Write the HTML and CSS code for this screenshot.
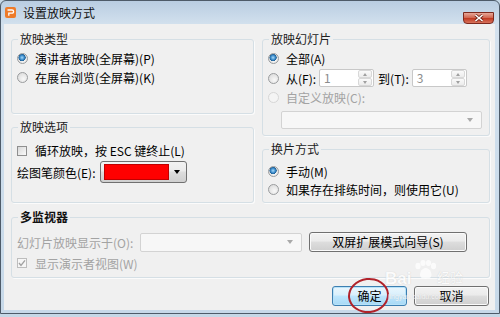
FILE: index.html
```html
<!DOCTYPE html>
<html lang="zh-CN">
<head>
  <meta charset="UTF-8" />
  <title>设置放映方式</title>
  <link rel="stylesheet" href="styles.css">
</head>
<body>
  <div class="window">
    <div class="titlebar">
      <svg class="app-icon" viewBox="0 0 11 11" width="11" height="11">
        <rect width="11" height="11" rx="2" fill="#ee7b2a"/>
        <path d="M2.5 3 H7 Q8.6 3 8.6 4.6 Q8.6 6.2 7 6.2 H3.8 V8.8" fill="none" stroke="#fff" stroke-width="1.3"/>
      </svg>
      <span class="title">设置放映方式</span>
      <button class="close-btn">
        <svg viewBox="0 0 10 8" width="10" height="8">
          <path d="M1.5 1 L8.5 7 M8.5 1 L1.5 7" stroke="#6e2418" stroke-width="3"/>
          <path d="M1.5 1 L8.5 7 M8.5 1 L1.5 7" stroke="#fff" stroke-width="1.6"/>
        </svg>
      </button>
    </div>

    <div class="client">
      <div class="top-grid">
        <div class="col">
          <fieldset class="group g-type">
            <legend>放映类型</legend>
            <div class="row"><span class="radio checked"></span>演讲者放映(全屏幕)(P)</div>
            <div class="row"><span class="radio"></span>在展台浏览(全屏幕)(K)</div>
          </fieldset>
          <fieldset class="group g-opts">
            <legend>放映选项</legend>
            <div class="row"><span class="check"></span>循环放映，按 ESC 键终止(L)</div>
            <div class="row pen-row">
              绘图笔颜色(E):
              <div class="color-pick">
                <span class="swatch"></span>
                <span class="drop-arrow dark"></span>
              </div>
            </div>
          </fieldset>
        </div>

        <div class="col">
          <fieldset class="group g-slides">
            <legend>放映幻灯片</legend>
            <div class="row"><span class="radio checked"></span>全部(A)</div>
            <div class="row range-row">
              <span class="radio"></span>从(F):
              <div class="spin"><span class="spin-val">1</span><span class="spin-btns"><i class="up"></i><i class="down"></i></span></div>
              <span class="to-label">到(T):</span>
              <div class="spin"><span class="spin-val">3</span><span class="spin-btns"><i class="up"></i><i class="down"></i></span></div>
            </div>
            <div class="row custom-row disabled"><span class="radio off"></span>自定义放映(C):</div>
            <div class="combo custom-combo"><span class="drop-arrow"></span></div>
          </fieldset>
          <fieldset class="group g-advance">
            <legend>换片方式</legend>
            <div class="row"><span class="radio checked"></span>手动(M)</div>
            <div class="row"><span class="radio"></span>如果存在排练时间，则使用它(U)</div>
          </fieldset>
        </div>
      </div>

      <fieldset class="group g-monitor">
        <legend class="strong">多监视器</legend>
        <div class="row monitor-row">
          <span class="monitor-label disabled">幻灯片放映显示于(O):</span>
          <div class="combo monitor-combo"><span class="drop-arrow"></span></div>
          <button class="btn wizard-btn">双屏扩展模式向导(S)</button>
        </div>
        <div class="row presenter-row disabled">
          <span class="check off">
            <svg viewBox="0 0 10 10" width="10" height="10"><path d="M2 5 L4 7.4 L8 2.4" stroke="#a2a2a2" stroke-width="1.4" fill="none"/></svg>
          </span>显示演示者视图(W)
        </div>
      </fieldset>

      <div class="actions">
        <button class="btn btn-default btn-ok">确定<span class="mark"></span></button>
        <button class="btn">取消</button>
      </div>

      <div class="watermark">
        <svg class="paw" viewBox="0 0 25 19" width="25" height="19">
          <ellipse cx="5" cy="6" rx="2.6" ry="3.2" fill="#fff"/>
          <ellipse cx="10" cy="3" rx="2.6" ry="3" fill="#fff"/>
          <ellipse cx="15.5" cy="3" rx="2.6" ry="3" fill="#fff"/>
          <ellipse cx="20.5" cy="6" rx="2.6" ry="3.2" fill="#fff"/>
          <path d="M12.7 8 C8 8 5.5 15 8 17.5 C10 19 15 19 17.5 17.5 C20 15 17.5 8 12.7 8 Z" fill="#fff"/>
        </svg>
        <span class="wm-bai">Bai</span>
        <span class="wm-jy">经验</span>
        <span class="wm-url">jingyan.baidu.com</span>
      </div>
    </div>
  </div>
</body>
</html>
```

FILE: styles.css
```css
* {
  box-sizing: border-box;
}

body {
  margin: 0;
  background: #c6d8e7;
  font-family: "Noto Sans CJK SC", "Liberation Sans", sans-serif;
  font-size: 12px;
  color: #000;
}

.window {
  width: 500px;
  height: 314px;
  border: 1px solid #4e5b69;
  border-radius: 6px 6px 0 0;
  background: linear-gradient(#b9cde2, #d3e1ee 24px, #c7d9e9);
  padding: 0 4px 3px 3px;
  display: flex;
  flex-direction: column;
}

.titlebar {
  height: 23px;
  display: flex;
  align-items: center;
}

.app-icon {
  margin-left: 1px;
  margin-right: 7px;
}

.title {
  line-height: 16px;
  color: #111;
}

.close-btn {
  margin-left: auto;
  margin-right: 1px;
  align-self: flex-end;
  width: 31px;
  height: 12px;
  padding: 0;
  border: 1px solid #7d2a1f;
  border-radius: 0 0 4px 4px;
  background: linear-gradient(#e8a899, #d0634d 50%, #c13c24 55%, #d8735c);
  display: flex;
  align-items: center;
  justify-content: center;
}

.client {
  flex: 1;
  position: relative;
  background: #f0f0f0;
  padding: 7px 5px 4px 7px;
}

.top-grid {
  display: grid;
  grid-template-columns: 243px 228px;
  column-gap: 8px;
}

.col {
  display: flex;
  flex-direction: column;
  gap: 5px;
}

.group {
  margin: 0;
  min-width: 0;
  border: 1px solid #d5dfe5;
  border-radius: 3px;
  box-shadow: 1px 1px 0 #fbfbfb;
  padding: 2px 5px;
}

.group legend {
  margin-left: 1px;
  padding: 0 2px;
  line-height: 16px;
  color: #222;
}

.group legend.strong {
  color: #111;
  font-weight: 600;
}

.row {
  display: flex;
  align-items: center;
  height: 19px;
  white-space: nowrap;
}

.disabled {
  color: #a3a3a3;
}

/* radio and checkbox, drawn like the Windows 7 ones */
.radio {
  width: 11px;
  height: 11px;
  margin-right: 7px;
  flex: none;
  border: 1px solid #9a9c9e;
  border-radius: 50%;
  background: radial-gradient(circle at 60% 65%, #f8f8f8, #d6d6d6);
}

.radio.checked {
  background:
    radial-gradient(circle at 45% 40%, #a8dcfa 0, #3d8ccc 2.2px, #1d5e93 3.4px, transparent 3.8px),
    radial-gradient(circle at 60% 65%, #f8f8f8, #d6d6d6);
}

.radio.off {
  border-color: #d6d6d6;
  background: #f4f4f4;
}

.check {
  width: 10px;
  height: 10px;
  margin-right: 8px;
  flex: none;
  border: 1px solid #8f8f8f;
  background: linear-gradient(135deg, #d8d8d8, #fafafa);
  display: flex;
  align-items: center;
  justify-content: center;
}

.check svg {
  flex: none;
}

.check.off {
  border-color: #bdbdbd;
  background: #f6f6f6;
}

/* left column */
.g-type {
  padding-bottom: 26px;
}

.g-opts {
  flex: 1;
  padding-top: 6px;
}

.pen-row {
  height: 22px;
  margin-top: 1px;
}

.color-pick {
  width: 87px;
  height: 22px;
  margin-left: 4px;
  border: 1px solid #707070;
  border-radius: 3px;
  padding: 2px 0 2px 3px;
  background: linear-gradient(#f2f2f2, #ebebeb 45%, #dddddd 50%, #cfcfcf);
  display: flex;
  align-items: center;
}

.swatch {
  width: 65px;
  height: 16px;
  background: #ff0000;
  border: 1px solid #c00000;
}

.color-pick .drop-arrow {
  margin: 0 auto;
}

.drop-arrow {
  width: 0;
  height: 0;
  border-left: 3.5px solid transparent;
  border-right: 3.5px solid transparent;
  border-top: 4px solid #a9a9a9;
}

.drop-arrow.dark {
  border-top-color: #000;
}

/* right column */
.g-slides {
  padding-bottom: 6px;
}

.range-row {
  height: 20px;
}

.spin {
  width: 55px;
  height: 18px;
  margin-left: 3px;
  border: 1px solid #c8c8c8;
  border-radius: 2px;
  background: #fff;
  display: flex;
}

.spin-val {
  flex: 1;
  padding-left: 4px;
  line-height: 16px;
  color: #8c8c8c;
}

.spin-btns {
  width: 15px;
  padding: 0 1px 0 0;
  display: flex;
  flex-direction: column;
}

.spin-btns i {
  flex: 1;
  border: 1px solid #d8d8d8;
  border-radius: 2px;
  background: linear-gradient(#fafafa, #ececec);
  display: flex;
  align-items: center;
  justify-content: center;
}

.spin-btns i::after {
  content: "";
  border-left: 2.5px solid transparent;
  border-right: 2.5px solid transparent;
}

.spin-btns .up::after {
  border-bottom: 3px solid #a0a0a0;
}

.spin-btns .down::after {
  border-top: 3px solid #a0a0a0;
}

.to-label {
  margin-left: 4px;
}

.custom-row {
  height: 18px;
}

.combo {
  height: 18px;
  border: 1px solid #d3d3d3;
  border-radius: 2px;
  background: #f7f7f7;
  display: flex;
  align-items: center;
  justify-content: flex-end;
  padding-right: 8px;
}

.custom-combo {
  width: 201px;
  margin: 5px 0 0 13px;
}

.g-advance {
  flex: 1;
  padding-top: 5px;
  padding-bottom: 4px;
}

.g-advance .row {
  height: 18px;
}

/* multi monitor */
.g-monitor {
  margin-top: 6px;
  padding-top: 7px;
  padding-bottom: 5px;
}

.monitor-row {
  height: 20px;
}

.monitor-label {
  width: 123px;
}

.monitor-combo {
  width: 162px;
  height: 19px;
}

.wizard-btn {
  width: 158px;
  margin-left: 7px;
}

.presenter-row {
  height: 18px;
  margin-top: 2px;
}

/* buttons */
.btn {
  height: 20px;
  padding: 0;
  font-family: inherit;
  font-size: 12px;
  line-height: 14px;
  color: #000;
  border: 1px solid #707070;
  border-radius: 3px;
  background: linear-gradient(#f2f2f2, #ebebeb 45%, #dddddd 50%, #cfcfcf);
  box-shadow: inset 0 0 0 1px #fafafa;
}

.actions {
  margin-top: 8px;
  margin-right: 1px;
  display: flex;
  justify-content: flex-end;
  gap: 7px;
}

.actions .btn {
  width: 75px;
}

.btn-default {
  position: relative;
  border-color: #3c7fb1;
  background: linear-gradient(#eaf6fd, #d9f0fc 45%, #bee6fd 50%, #a7d9f5);
  box-shadow: inset 0 0 0 1px #b8e2f8;
}

/* red hand-drawn circle around the OK button */
.mark {
  position: absolute;
  left: 15px;
  top: -9px;
  width: 41px;
  height: 35px;
  border: 2.5px solid #b0222a;
  border-radius: 50%;
  transform: rotate(-6deg);
}

/* faint site watermark */
.watermark {
  position: absolute;
  left: 381px;
  top: 235px;
  width: 96px;
  height: 40px;
  opacity: 0.75;
  color: #fff;
  pointer-events: none;
}

.paw {
  position: absolute;
  left: 28px;
  top: 1px;
}

.wm-bai {
  position: absolute;
  left: 0;
  top: 13px;
  line-height: 14px;
  font-family: "Liberation Sans", sans-serif;
  font-size: 17px;
  font-weight: bold;
  text-shadow: 0 0 1px #bbb;
}

.wm-jy {
  position: absolute;
  left: 52px;
  top: 12px;
  line-height: 12px;
  font-size: 13px;
  text-shadow: 0 0 1px #bbb;
}

.wm-url {
  position: absolute;
  left: 3px;
  top: 34px;
  line-height: 8px;
  font-family: "Liberation Sans", sans-serif;
  font-size: 7px;
  white-space: nowrap;
  text-shadow: 0 0 1px #bbb;
}
```
